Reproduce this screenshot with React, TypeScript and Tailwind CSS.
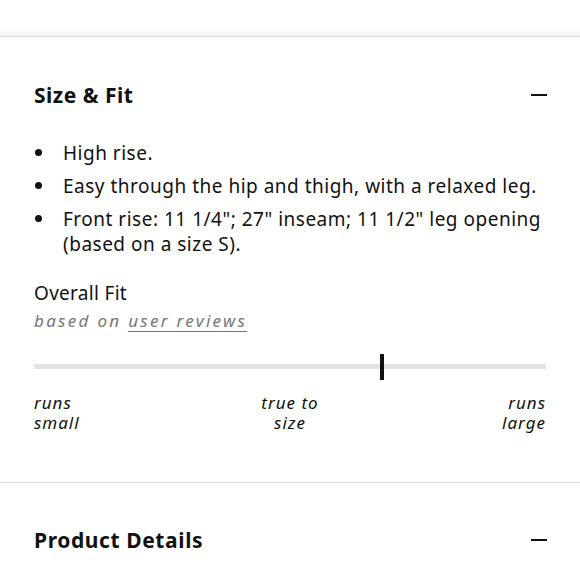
import React from 'react';

const Minus: React.FC = () => (
  <span className="block w-[16px] h-[2px] bg-[#111]" />
);

const bullets = [
  'High rise.',
  'Easy through the hip and thigh, with a relaxed leg.',
  'Front rise: 11 1/4"; 27" inseam; 11 1/2" leg opening (based on a size S).',
];

const App: React.FC = () => {
  const fit = 0.679;

  return (
    <div className="w-[580px] h-[580px] overflow-hidden bg-white text-[#111] font-['Noto_Sans','Liberation_Sans',sans-serif]">
      {/* top edge of previous section */}
      <div className="h-[27px]" />
      <div className="h-[10px] bg-gradient-to-b from-white to-[#f4f4f4] border-b border-[#dcdcdc]" />

      {/* Size & Fit */}
      <section className="pl-[34px] pr-[33px]">
        <div className="mt-[44px] flex items-center justify-between h-[28px]">
          <h2 className="text-[21px] font-bold leading-[28px] tracking-[0.5px]">Size &amp; Fit</h2>
          <Minus />
        </div>

        <ul className="mt-[32px] space-y-[8px]">
          {bullets.map(b => (
            <li key={b} className="flex text-[19px] leading-[25px] tracking-[0.5px]">
              <span className="w-[29px] shrink-0 flex pt-[8px] pl-[1px]">
                <span className="block w-[7px] h-[7px] rounded-full bg-[#111]" />
              </span>
              <span>{b}</span>
            </li>
          ))}
        </ul>

        <div className="mt-[24px] text-[19px] leading-[25px] tracking-[0.3px]">Overall Fit</div>
        <div className="mt-[2px] text-[17px] leading-[25px] italic tracking-[2.3px] text-[#777]">
          based on <span className="underline underline-offset-[4px]">user reviews</span>
        </div>

        <div className="mt-[21px] relative h-[26px] w-[512px]">
          <div className="absolute left-0 right-0 top-[10px] h-[5px] bg-[#e2e2e2]" />
          <div
            className="absolute top-0 h-[26px] w-[4px] bg-[#111]"
            style={{ left: `${fit * 512 - 2}px` }}
          />
        </div>

        <div className="mt-[13px] grid grid-cols-3 w-[512px] text-[17px] leading-[20px] italic tracking-[1px]">
          <div className="text-left">runs<br />small</div>
          <div className="text-center">true to<br />size</div>
          <div className="text-right">runs<br />large</div>
        </div>
      </section>

      <div className="mt-[49px] border-t border-[#dcdcdc]" />

      {/* Product Details */}
      <section className="pl-[34px] pr-[33px]">
        <div className="mt-[43px] flex items-center justify-between h-[28px]">
          <h2 className="text-[21px] font-bold leading-[28px] tracking-[0.6px]">Product Details</h2>
          <Minus />
        </div>
      </section>
    </div>
  );
};

export default App;
